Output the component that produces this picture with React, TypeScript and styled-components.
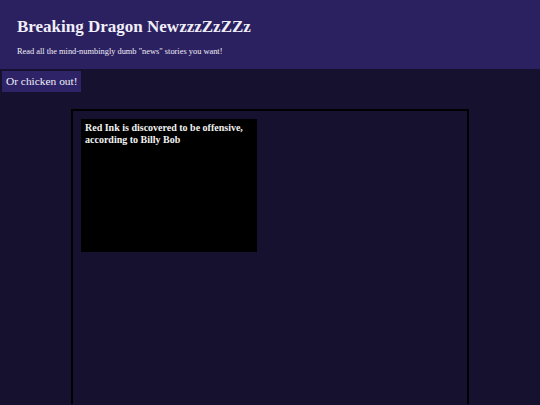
import React from "react";
import styled, { createGlobalStyle } from "styled-components";

const Global = createGlobalStyle`
  html, body { margin: 0; padding: 0; }
  body {
    background: #16112f;
    font-family: "Liberation Serif", "Times New Roman", serif;
    color: #f0eef8;
    min-height: 405px;
  }
`;

const Header = styled.header`
  box-sizing: border-box;
  background: #2b2060;
  padding: 17px 17px 0;
  height: 69px;
`;

const Title = styled.h1`
  margin: 0;
  font-size: 17px;
  font-weight: bold;
  line-height: 20px;
`;

const Subtitle = styled.p`
  margin: 9px 0 0;
  font-size: 8.4px;
  line-height: 11px;
`;

const Button = styled.button`
  display: block;
  margin: 2px 0 0 2px;
  background: #2e2366;
  color: #f0eef8;
  border: none;
  font-family: "Liberation Serif", "Times New Roman", serif;
  font-size: 11.4px;
  padding: 0 4px;
  height: 21px;
  line-height: 21px;
`;

const Container = styled.main`
  box-sizing: border-box;
  width: 398px;
  margin: 17px auto 0;
  border: 2px solid #000;
  border-bottom: none;
  padding: 8px;
  height: 295px;
  display: flex;
  flex-wrap: wrap;
  align-items: flex-start;
`;

const Card = styled.article`
  box-sizing: border-box;
  width: 176px;
  height: 133px;
  background: #000;
  padding: 3px 4px;
`;

const CardTitle = styled.h3`
  margin: 0;
  font-size: 10px;
  font-weight: bold;
  line-height: 12px;
  color: #f2f2f2;
`;

export default function App() {
  return (
    <>
      <Global />
      <Header>
        <Title>Breaking Dragon NewzzzZzZZz</Title>
        <Subtitle>Read all the mind-numbingly dumb "news" stories you want!</Subtitle>
      </Header>
      <Button>Or chicken out!</Button>
      <Container>
        <Card>
          <CardTitle>Red Ink is discovered to be offensive, according to Billy Bob</CardTitle>
        </Card>
      </Container>
    </>
  );
}
